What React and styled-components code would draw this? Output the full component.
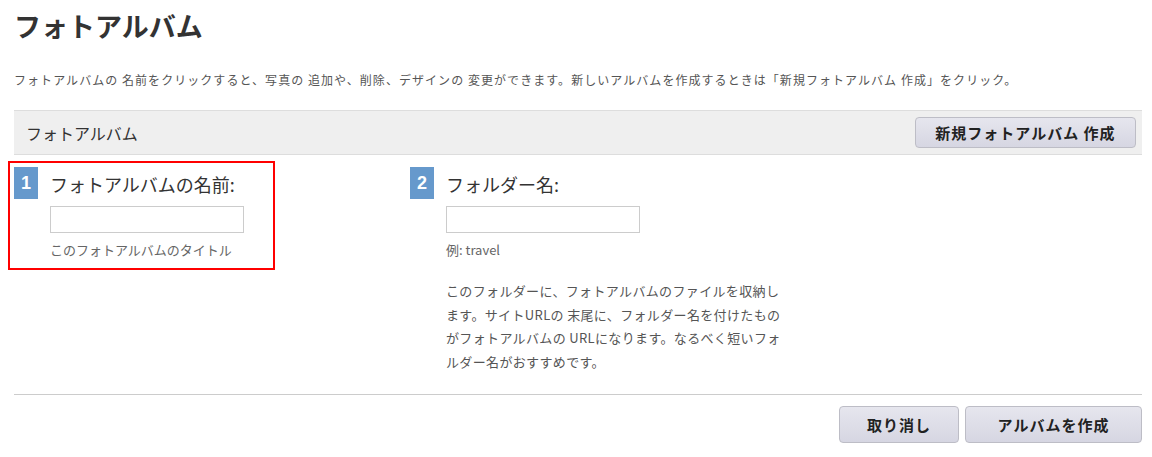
import React from 'react'
import styled, { createGlobalStyle } from 'styled-components'

const GlobalStyle = createGlobalStyle`
    body {
        margin: 0;
        background: #fff;
        font-family: "Noto Sans CJK JP", "Noto Sans", sans-serif;
        color: #333;
    }
`

const Page = styled.div`
    width: 1128px;
    padding: 0 10px 0 14px;
`

const Title = styled.h1`
    margin: 0;
    padding-top: 8px;
    height: 44px;
    font-size: 27px;
    font-weight: bold;
    line-height: 36px;
    color: #333;
`

const Lead = styled.p`
    margin: 18px 0 0;
    font-size: 12px;
    line-height: 20px;
    letter-spacing: 1.05px;
    color: #555;
    white-space: nowrap;
`

const Bar = styled.div`
    display: flex;
    align-items: center;
    justify-content: space-between;
    margin-top: 20px;
    height: 43px;
    padding: 0 6px 0 12px;
    background: #efefef;
    border-top: 1px solid #ddd;
    border-bottom: 1px solid #ddd;
`

const BarTitle = styled.span`
    font-size: 16px;
    color: #333;
`

const Button = styled.button`
    height: ${(p) => p.$h || 31}px;
    width: ${(p) => p.$w}px;
    padding: 0;
    border: 1px solid #bdbdc6;
    border-radius: 4px;
    background: linear-gradient(#e6e6ee, #d6d6e2);
    font-family: "Noto Sans CJK JP", sans-serif;
    font-size: 15px;
    font-weight: bold;
    letter-spacing: 1px;
    color: #222;
    cursor: pointer;
`

const Columns = styled.div`
    display: grid;
    grid-template-columns: 396px 1fr;
    margin-top: 6px;
`

const Highlight = styled.div`
    width: 259px;
    margin-left: -6px;
    padding: 4px 0 0 4px;
    height: 101px;
    border: 2px solid #f00;
`

const Field = styled.div`
    display: flex;
    gap: 12px;
    padding-top: ${(p) => p.$top || 0}px;
`

const Badge = styled.div`
    flex: 0 0 24px;
    height: 32px;
    background: #6699cc;
    color: #fff;
    font-family: "Liberation Sans", Arial, sans-serif;
    font-size: 18px;
    font-weight: bold;
    line-height: 32px;
    text-align: center;
`

const FieldBody = styled.div`
    display: flex;
    flex-direction: column;
`

const Label = styled.div`
    height: 39px;
    font-size: 18px;
    line-height: 34px;
    color: #333;
`

const Input = styled.input`
    box-sizing: border-box;
    width: 194px;
    height: 27px;
    margin: 0;
    border: 1px solid #ccc;
    background: #fff;
`

const Hint = styled.div`
    margin-top: 8px;
    font-size: 13px;
    line-height: 18px;
    color: #666;
`

const Note = styled.p`
    margin: 20px 0 0;
    font-size: 13px;
    line-height: 23.5px;
    letter-spacing: 0.35px;
    color: #555;
    white-space: nowrap;
`

const Footer = styled.div`
    display: flex;
    justify-content: flex-end;
    gap: 6px;
    margin-top: 21px;
    padding-top: 11px;
    border-top: 1px solid #ccc;
`

export default function App() {
    return (
        <Page>
            <GlobalStyle />
            <Title>フォトアルバム</Title>
            <Lead>
                フォトアルバムの 名前をクリックすると、写真の 追加や、削除、デザインの 変更ができます。新しいアルバムを作成するときは「新規フォトアルバム 作成」をクリック。
            </Lead>
            <Bar>
                <BarTitle>フォトアルバム</BarTitle>
                <Button $w={221}>新規フォトアルバム 作成</Button>
            </Bar>
            <Columns>
                <div>
                    <Highlight>
                        <Field>
                            <Badge>1</Badge>
                            <FieldBody>
                                <Label>フォトアルバムの名前:</Label>
                                <Input type="text" />
                                <Hint>このフォトアルバムのタイトル</Hint>
                            </FieldBody>
                        </Field>
                    </Highlight>
                </div>
                <Field $top={6}>
                    <Badge>2</Badge>
                    <FieldBody>
                        <Label>フォルダー名:</Label>
                        <Input type="text" />
                        <Hint>例: travel</Hint>
                        <Note>
                            このフォルダーに、フォトアルバムのファイルを収納し<br />
                            ます。サイトURLの 末尾に、フォルダー名を付けたもの<br />
                            がフォトアルバムの URLになります。なるべく短いフォ<br />
                            ルダー名がおすすめです。
                        </Note>
                    </FieldBody>
                </Field>
            </Columns>
            <Footer>
                <Button $w={120} $h={37}>取り消し</Button>
                <Button $w={177} $h={37}>アルバムを作成</Button>
            </Footer>
        </Page>
    )
}
